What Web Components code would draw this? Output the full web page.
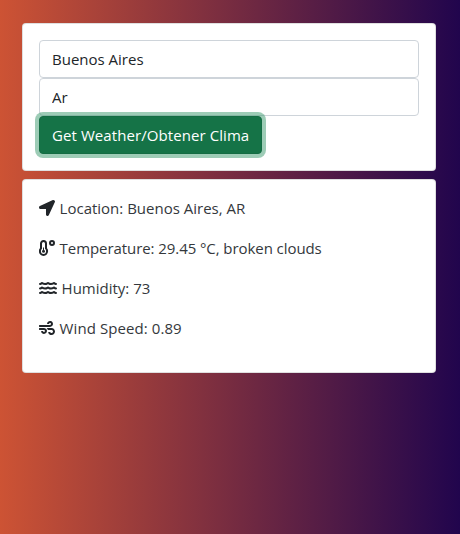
<!DOCTYPE html>
<html lang="en">
<head>
<meta charset="utf-8">
<title>Weather</title>
<style>
html{height:100%}
body{margin:0;min-height:100%;box-sizing:border-box;padding:23px 24px 0 22px;
 font:15px/24px "Segoe UI","Open Sans","Noto Sans",sans-serif;color:#212529;
 background:linear-gradient(90deg,#cd5334,#21054d)}
</style>
</head>
<body>
<weather-app></weather-app>
<script>
const define = (name, html, setup) => customElements.define(name, class extends HTMLElement {
  constructor() {
    super();
    this.attachShadow({mode: 'open'}).innerHTML = html;
  }
  connectedCallback() { if (setup) setup(this, this.shadowRoot); }
});

define('ui-card', `<style>
:host{display:block;box-sizing:border-box;background:#fff;border:1px solid rgba(0,0,0,.125);border-radius:4px;padding:16px}
</style><slot></slot>`);

define('text-field', `<style>
:host{display:block}
input{display:block;box-sizing:border-box;width:100%;height:38px;margin:0;padding:6px 12px;border:1px solid #ced4da;border-radius:4px;background:#fff;font:inherit;letter-spacing:inherit;color:#212529;outline:none}
</style><input type="text">`, (host, root) => {
  root.querySelector('input').value = host.getAttribute('value') || '';
});

define('action-button', `<style>
:host{display:block;width:max-content}
button{display:block;box-sizing:border-box;width:223px;height:38px;margin:0;padding:6px 0 6px 12px;text-align:left;white-space:nowrap;border:1px solid #146c43;border-radius:4px;background:#157347;color:#fff;font:inherit;letter-spacing:.08px;box-shadow:0 0 0 4px rgba(60,153,110,.5);position:relative}
</style><button type="button"><slot></slot></button>`);

const wave = 'M269.5 69.9c11.1-7.9 25.9-7.9 37 0C329 85.4 356.5 96 384 96c26.9 0 55.4-10.8 77.4-26.1c11.9-8.5 28.1-7.8 39.2 1.7c14.4 11.9 32.5 21 50.6 25.2c17.2 4 27.9 21.2 23.9 38.4s-21.2 27.9-38.4 23.9c-24.5-5.7-44.9-16.5-58.2-25C449.5 149.7 417 160 384 160c-31.9 0-60.6-9.9-80.4-18.9c-5.8-2.7-11.1-5.3-15.6-7.7c-4.5 2.4-9.7 5.1-15.6 7.7c-19.8 9-48.5 18.9-80.4 18.9c-33 0-65.5-10.3-94.5-25.8c-13.4 8.4-33.7 19.3-58.2 25c-17.2 4-34.4-6.7-38.4-23.9s6.7-34.4 23.9-38.4C42.8 92.6 61 83.5 75.3 71.6c11.1-9.5 27.3-10.1 39.2-1.7C136.7 85.2 165.1 96 192 96c27.5 0 55-10.6 77.5-26.1z';
const icons = {
  location: [16, `<path fill="currentColor" transform="scale(.03125)" d="M444.52 3.52L28.74 195.42c-47.97 22.39-31.98 92.75 19.19 92.75h175.91v175.91c0 51.17 70.36 67.17 92.75 19.19l191.9-415.78c15.99-38.39-25.59-79.97-63.97-63.96z"/>`],
  temperature: [16, `<g fill="none" stroke="currentColor" stroke-width="2"><path d="M2 8.4V3.5a2.5 2.5 0 0 1 5 0v4.9c.7.7 1.1 1.6 1.1 2.7a3.6 3.9 0 0 1-7.2 0c0-1.1.4-2 1.1-2.7z"/><circle cx="13" cy="3" r="2"/></g><path d="M4.5 7.5v3.5" stroke="currentColor" stroke-width="1"/><circle cx="4.5" cy="11.2" r="1.5" fill="currentColor"/>`],
  humidity: [18, `<g fill="currentColor" transform="scale(.03125)"><path d="${wave}"/><path transform="translate(0 144)" d="${wave}"/><path transform="translate(0 288)" d="${wave}"/></g>`],
  wind: [16, `<path fill="currentColor" transform="scale(.03125)" d="M156.7 256H16c-8.8 0-16 7.2-16 16v32c0 8.8 7.2 16 16 16h142.2c15.9 0 30.8 10.9 33.4 26.6 3.3 20-12.1 37.4-31.6 37.4-14.1 0-26.1-9.2-30.4-21.9-2.1-6.3-8.6-10.1-15.2-10.1H81.6c-9.8 0-17.7 8.8-15.9 18.4 8.6 44.1 47.6 77.6 94.2 77.6 57.1 0 102.7-50.1 95.2-108.6C249 291 205.4 256 156.7 256zM16 224h336c59.7 0 106.8-54.8 93.8-116.7-7.6-36.2-36.9-65.5-73.1-73.1-55.4-11.6-105.1 24.9-114.9 75.5-1.9 9.6 6.1 18.3 15.8 18.3h32.8c6.7 0 13.1-3.8 15.2-10.1C325.9 105.2 337.9 96 352 96c19.4 0 34.9 17.4 31.6 37.4-2.6 15.7-17.4 26.6-33.4 26.6H16c-8.8 0-16 7.2-16 16v32c0 8.8 7.2 16 16 16zm384 32H243.7c19.3 16.6 33.2 38.8 39.8 64H400c26.5 0 48 21.5 48 48s-21.5 48-48 48c-17.9 0-33.3-9.9-41.6-24.4-2.9-5-8.7-7.6-14.5-7.6h-33.8c-10.9 0-19 10.8-15.3 21.1C312.6 452 353 480 400 480c61.9 0 112-50.1 112-112s-50.1-112-112-112z"/>`]
};

define('weather-row', `<style>
:host{display:flex;align-items:flex-start;height:24px;margin-bottom:16px;color:#212529;white-space:nowrap}
:host([icon=temperature]){letter-spacing:-.07px}
:host([icon=wind]){letter-spacing:.08px}
svg{flex:none;display:block;margin:4px 4.6px 0 0}
span{color:#34383c}
</style><svg height="16"></svg><span><slot></slot></span>`, (host, root) => {
  const [width, art] = icons[host.getAttribute('icon')];
  const svg = root.querySelector('svg');
  svg.setAttribute('width', width);
  svg.setAttribute('viewBox', `0 0 ${width} 16`);
  svg.innerHTML = art;
});

define('weather-app', `<style>
:host{display:flex;flex-direction:column;gap:8px}
</style>
<ui-card>
<text-field value="Buenos Aires"></text-field>
<text-field value="Ar"></text-field>
<action-button>Get Weather/Obtener Clima</action-button>
</ui-card>
<ui-card>
<weather-row icon="location">Location: Buenos Aires, AR</weather-row>
<weather-row icon="temperature">Temperature: 29.45 °C, broken clouds</weather-row>
<weather-row icon="humidity">Humidity: 73</weather-row>
<weather-row icon="wind">Wind Speed: 0.89</weather-row>
</ui-card>`);
</script>
</body>
</html>
